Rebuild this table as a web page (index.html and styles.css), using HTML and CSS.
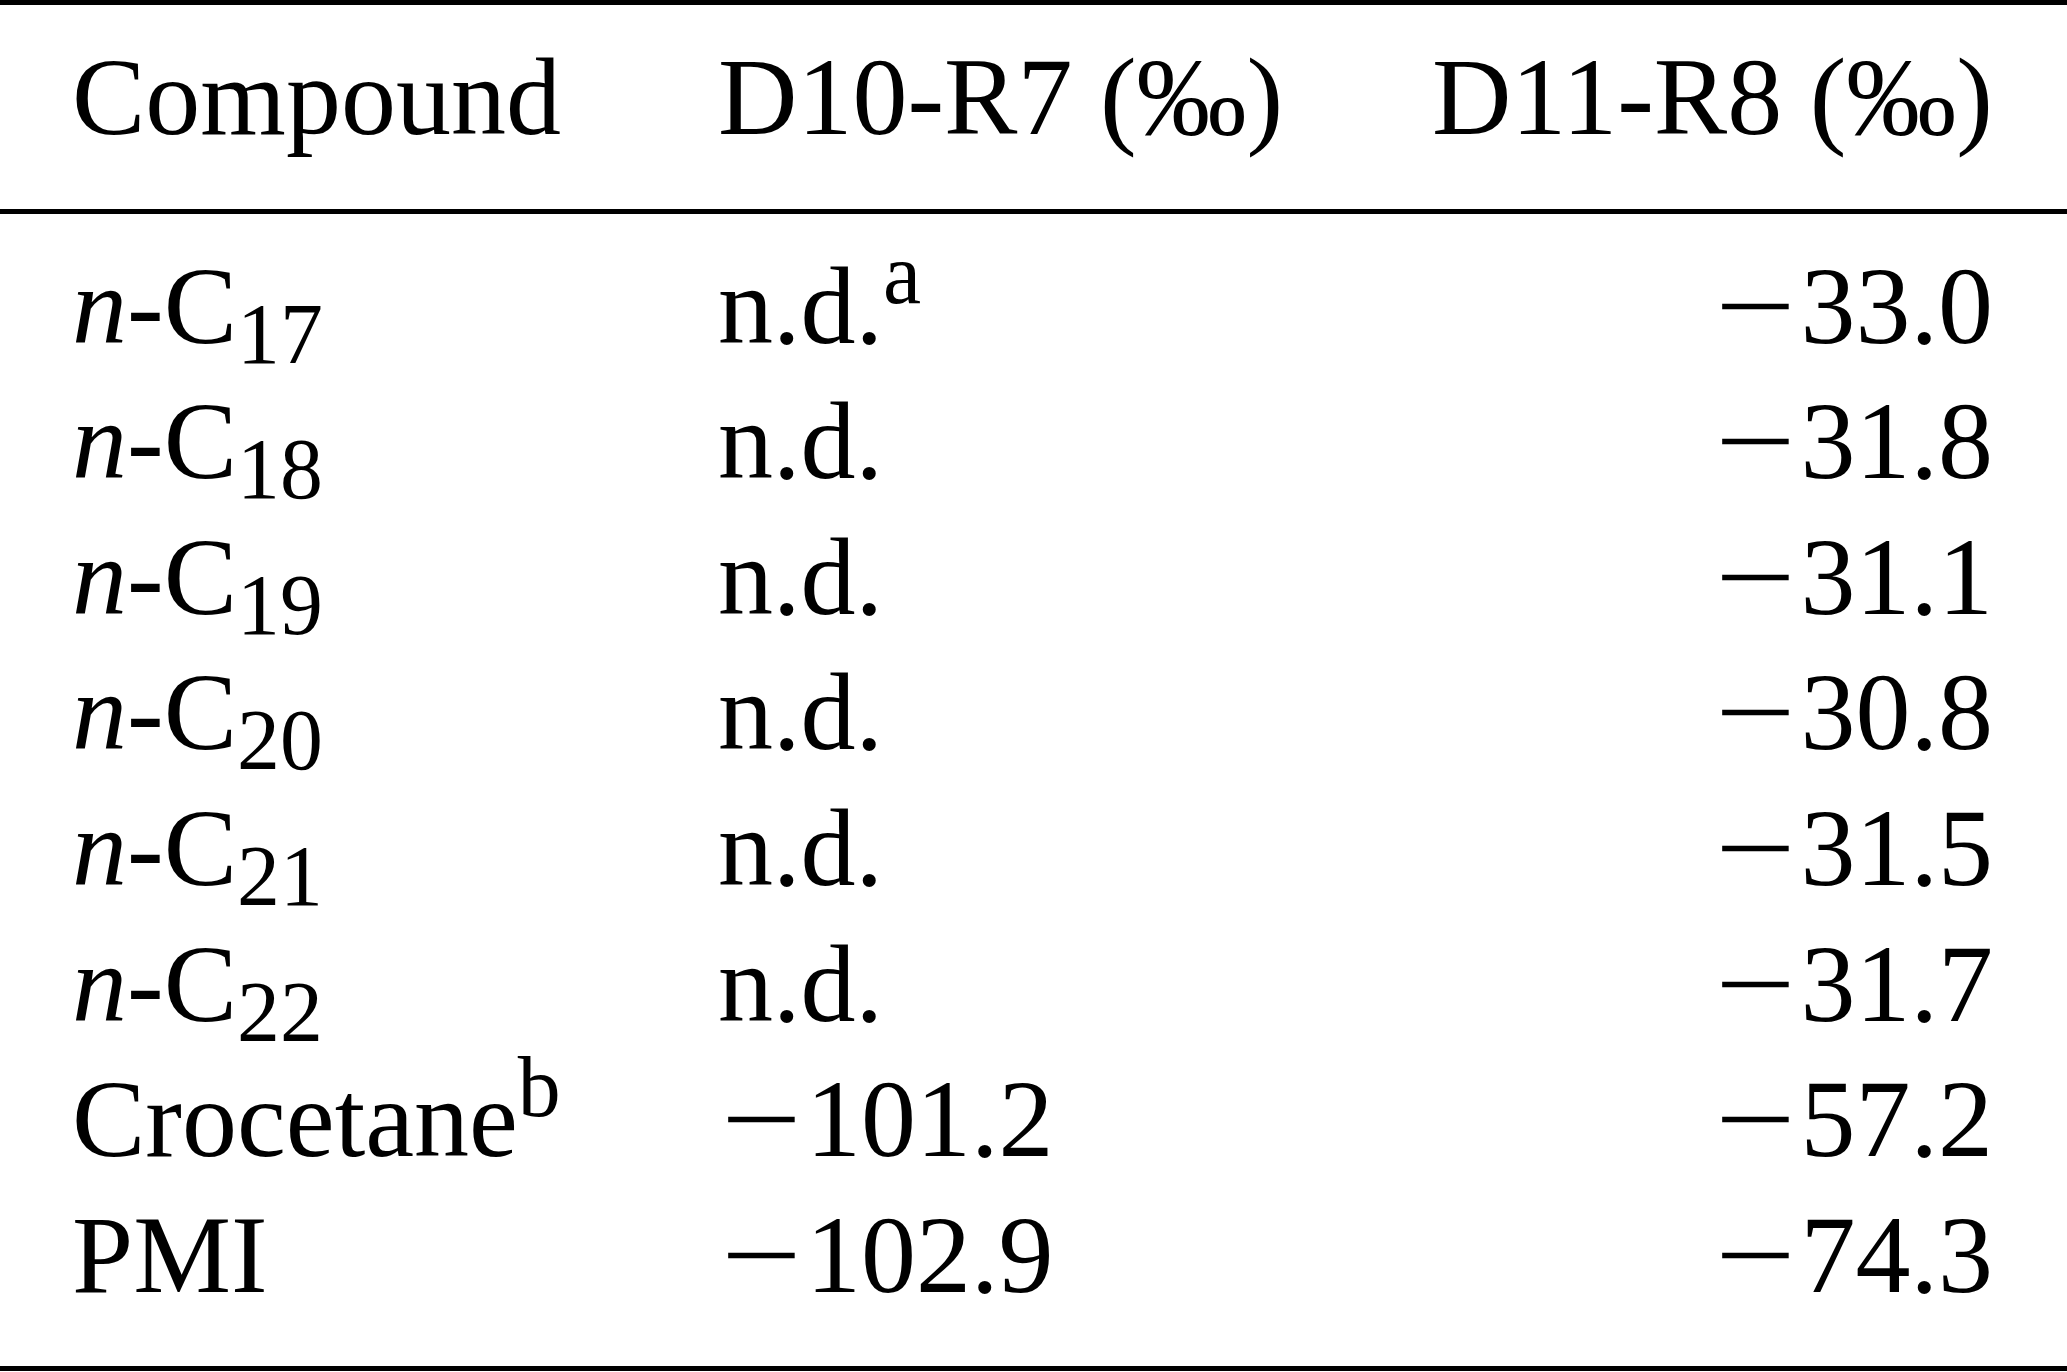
FILE: index.html
```html
<!DOCTYPE html>
<html>
  <head>
    <link rel="stylesheet" href="styles.css">
  </head>

  <body>
    <table class="datatable">
      <colgroup>
        <col class="colname">
        <col class="colmid">
        <col class="colright">
      </colgroup>
      <thead>
        <tr>
          <th class="namecell">Compound</th>
          <th>D10-R7 (‰)</th>
          <th class="numcell">D11-R8 (‰)</th>
        </tr>
      </thead>
      <tbody>
        <tr class="firstrow">
          <td class="namecell"><i>n</i>-C<sub>17</sub></td>
          <td>n.d.<sup>a</sup></td>
          <td class="numcell"><span class="minus">−</span>33.0</td>
        </tr>
        <tr>
          <td class="namecell"><i>n</i>-C<sub>18</sub></td>
          <td>n.d.</td>
          <td class="numcell"><span class="minus">−</span>31.8</td>
        </tr>
        <tr>
          <td class="namecell"><i>n</i>-C<sub>19</sub></td>
          <td>n.d.</td>
          <td class="numcell"><span class="minus">−</span>31.1</td>
        </tr>
        <tr>
          <td class="namecell"><i>n</i>-C<sub>20</sub></td>
          <td>n.d.</td>
          <td class="numcell"><span class="minus">−</span>30.8</td>
        </tr>
        <tr>
          <td class="namecell"><i>n</i>-C<sub>21</sub></td>
          <td>n.d.</td>
          <td class="numcell"><span class="minus">−</span>31.5</td>
        </tr>
        <tr>
          <td class="namecell"><i>n</i>-C<sub>22</sub></td>
          <td>n.d.</td>
          <td class="numcell"><span class="minus">−</span>31.7</td>
        </tr>
        <tr>
          <td class="namecell">Crocetane<sup>b</sup></td>
          <td><span class="minus">−</span>101.2</td>
          <td class="numcell"><span class="minus">−</span>57.2</td>
        </tr>
        <tr class="lastrow">
          <td class="namecell">PMI</td>
          <td><span class="minus">−</span>102.9</td>
          <td class="numcell"><span class="minus">−</span>74.3</td>
        </tr>
      </tbody>
    </table>
  </body>
</html>
```

FILE: styles.css
```css
body {
  margin: 0;
  background-color: white;
  color: black;
  font-family: "Liberation Serif", "Times New Roman", serif;
}

.datatable {
  width: 100%;
  table-layout: fixed;
  border-collapse: separate;
  border-spacing: 0;
  border-top: 5px solid black;
  border-bottom: 5px solid black;
  font-size: 110px;
  line-height: 135.6px;
}

.colname {
  width: 718px;
}

.colright {
  width: 767px;
}

th,
td {
  padding: 0;
  text-align: left;
  font-weight: 400;
  white-space: nowrap;
}

thead th {
  padding-top: 25px;
  padding-bottom: 43px;
  border-bottom: 5px solid black;
}

.firstrow td {
  padding-top: 25px;
}

.lastrow td {
  padding-bottom: 43px;
}

.namecell {
  padding-left: 72px;
}

.numcell {
  text-align: right;
  padding-right: 74px;
}

/* math minus: longer bar, wider gap than the text glyph */
.minus {
  display: inline-block;
  transform: scaleX(1.3);
  margin-left: 12px;
  margin-right: 14px;
}

sub,
sup {
  font-size: 0.78em;
  line-height: 0;
}

sub {
  vertical-align: -20px;
}

sup {
  vertical-align: 40px;
}
```
